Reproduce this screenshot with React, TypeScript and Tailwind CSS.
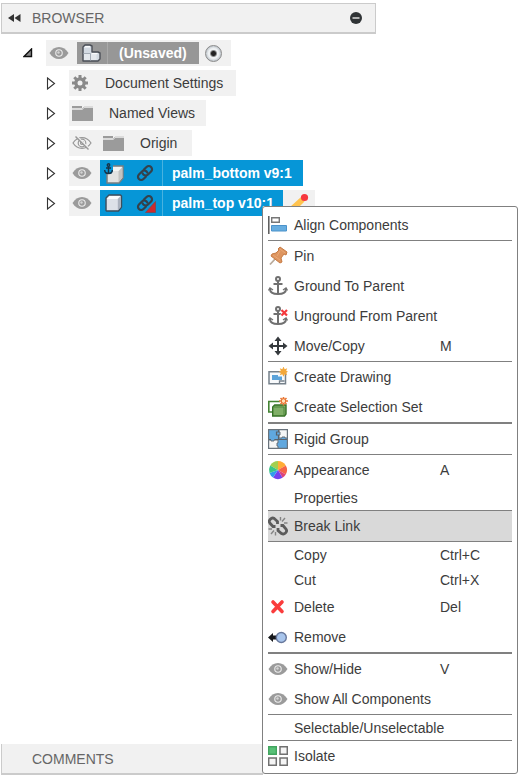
import type { ReactNode } from "react";

function Eye() {
  return (
    <svg width="20" height="14" viewBox="0 0 20 14" aria-hidden="true">
      <path d="M0.500 7C3 3 6 1 10 1s7 2 9.500 6C17 11 14 13 10 13S3 11 0.500 7z" fill="#9b9b9b" />
      <circle cx="10" cy="7" r="3.800" fill="#ececec" />
      <circle cx="10" cy="7" r="2.700" fill="#9b9b9b" />
      <circle cx="9.500" cy="6.500" r="1.200" fill="#d4d4d4" />
    </svg>
  );
}

function EyeOff() {
  return (
    <svg width="20" height="14" viewBox="0 0 20 14" fill="none" stroke="#979797" strokeWidth="1.200" aria-hidden="true">
      <path d="M1 7C3.500 3.200 6.500 1.700 10 1.700S16.500 3.200 19 7c-2.500 3.800-5.500 5.300-9 5.300S3.500 10.800 1 7z" />
      <circle cx="10" cy="7" r="3.800" />
      <circle cx="10" cy="7" r="1.500" />
      <path d="M5 0.500L18 13.500" stroke="#f1f1f1" strokeWidth="1.500" />
      <path d="M3.500 0.500L16.500 13.500" strokeWidth="1.400" />
    </svg>
  );
}

function Folder() {
  return (
    <svg width="21" height="17" viewBox="0 0 21 17" aria-hidden="true">
      <path d="M0 1h10v2H0zM0 5h10l2-2h9v13H0z" fill="#9b9b9b" />
      <path d="M0 4h10l2-2h9" stroke="#c4c4c4" fill="none" />
    </svg>
  );
}

function Gear() {
  return (
    <svg width="16" height="16" viewBox="0 0 16 16" aria-hidden="true">
      <g stroke="#8a8a8a" strokeWidth="3">
        <path d="M8 0v16M0 8h16M2.300 2.300l11.400 11.400M13.700 2.300L2.300 13.700" />
      </g>
      <circle cx="8" cy="8" r="5.800" fill="#8a8a8a" />
      <circle cx="8" cy="8" r="2.500" fill="#f1f1f1" />
    </svg>
  );
}

function Assembly() {
  return (
    <svg width="19" height="18" viewBox="0 0 19 18" strokeLinejoin="round" aria-hidden="true">
      <path d="M1 3l2-2h5l2 1v6h6l2 1v6l-2 2H1z" fill="#d3dae2" stroke="#4b4f57" strokeWidth="1.400" />
      <path d="M2 3.500L3.500 2H8v1.500zM10 9h6l-1.500 1.500H9z" fill="#fbfcfd" />
      <path d="M2 10h6v6H2zM9 11h5.500v5H9z" fill="#e4e8ed" />
      <path d="M1.500 9.500h7V16.500" stroke="#a3abb5" fill="none" />
    </svg>
  );
}

function Cube() {
  return (
    <svg width="20" height="20" viewBox="0 0 20 20" strokeLinejoin="round" aria-hidden="true">
      <path d="M2 5l3-3h11.500l1 1v11l-3 4H2.500L2 17.500z" fill="#c9ced9" stroke="#3c4f5e" strokeWidth="1.400" />
      <path d="M3 6h10.500v11H3z" fill="#dde1e8" />
      <path d="M3 5.500l2.500-2.500H16.500l-3 3H3z" fill="#fafbfc" />
      <path d="M14 6l3-3v11l-3 3z" fill="#abb2be" />
    </svg>
  );
}

function AnchoredCube() {
  return (
    <svg width="21" height="21" viewBox="0 0 21 21" aria-hidden="true">
      <path d="M3 8l4-5h12v12l-4 5H3z" fill="#e3e3e1" stroke="#7b7f80" strokeWidth="1.500" />
      <path d="M14.500 8l4-4v10.500l-4 5z" fill="#c3c3c1" />
      <path d="M4 8l3.500-4H18l-3.500 4z" fill="#f4f4f2" />
      <path d="M0 0h9v8l-2 3H2L0 9z" fill="#0696d7" />
      <g fill="none" stroke="#173247" strokeWidth="1.400">
        <circle cx="4.500" cy="2" r="1.200" />
        <path d="M4.500 3v7M2 5h5M0.700 7c0 2.500 2 3.500 3.800 3.500S8.300 9.500 8.300 7" />
      </g>
    </svg>
  );
}

function LinkIcon({ changed = false }: { changed?: boolean }) {
  return (
    <svg width="20" height="20" viewBox="0 0 20 20" aria-hidden="true">
      <g transform="rotate(-45 9 10)" fill="none" stroke="#34414b" strokeWidth="2.200" strokeLinecap="round">
        <path d="M7 13.200H3.600a3.200 3.200 0 0 1 0-6.400H8a3.200 3.200 0 0 1 2.900 4.600" />
        <path d="M11 6.800h3.400a3.200 3.200 0 0 1 0 6.400H10a3.200 3.200 0 0 1-2.900-4.600" />
      </g>
      {changed && <path d="M9.500 19.500L19.500 8.500v11z" fill="#cf2a2d" stroke="#80454f" strokeWidth="0.800" />}
    </svg>
  );
}

function Pencil() {
  return (
    <svg width="20" height="20" viewBox="0 0 20 20" aria-hidden="true">
      <path d="M0 19l1-5L11.500 4.500l4 4L6 18z" fill="#ffc34e" />
      <path d="M11.500 4.500l2-2 4 4-2 2z" fill="#dbe1e4" />
      <circle cx="15.500" cy="4.500" r="3.600" fill="#f6373d" />
    </svg>
  );
}

function Icon({ children }: { children: ReactNode }) {
  return (
    <svg width="20" height="20" viewBox="0 0 20 20" aria-hidden="true">
      {children}
    </svg>
  );
}

const alignIcon = (
  <Icon>
    <path d="M0.800 1v18" stroke="#595959" strokeWidth="1.500" />
    <path d="M3.700 2.700h7.600v4.600H3.700z" fill="#fff" stroke="#777" strokeWidth="1.400" />
    <path d="M3.500 10.500h15v5.500h-15z" fill="#67ade0" stroke="#4b92ca" />
  </Icon>
);

const pinIcon = (
  <Icon>
    <path d="M8 12L2 18.500" stroke="#b9aa9b" strokeWidth="1.800" />
    <path d="M12 1l7 5-1 3-2-1-3 4 1 4-2 1-9-7 1-2 4-1 3-3-1-1z" fill="#dd9560" stroke="#c77b43" />
    <path d="M12 3l5 4M5 9l7 5M12 5l-3 5" stroke="#eba875" fill="none" />
  </Icon>
);

const anchorShape = (
  <g fill="none" stroke="#707070" strokeWidth="2">
    <circle cx="10" cy="3" r="2" />
    <path d="M10 5v13M5.500 8h9M2 13c0 3 3 5 8 5s8-2 8-5" />
    <path d="M0.500 14.500L2 12l3 2M19.500 14.500L18 12l-3 2" strokeWidth="1.400" />
  </g>
);

const anchorIcon = <Icon>{anchorShape}</Icon>;

const unanchorIcon = (
  <Icon>
    {anchorShape}
    <path d="M13.500 4l5.500 5.500M19 4l-5.500 5.500" stroke="#fff" strokeWidth="3.600" />
    <path d="M13.500 4l5.500 5.500M19 4l-5.500 5.500" stroke="#f5383c" strokeWidth="2.200" />
  </Icon>
);

const moveIcon = (
  <Icon>
    <path d="M10 3v14M3 10h14" stroke="#35393d" strokeWidth="2" />
    <path d="M10 0.500L6.500 5h7zM10 19.500L6.500 15h7zM0.500 10L5 6.500v7zM19.500 10L15 6.500v7z" fill="#35393d" />
  </Icon>
);

const drawingIcon = (
  <Icon>
    <path d="M1 4.800h16.500v12H1z" fill="#f8fafc" stroke="#76818b" strokeWidth="1.500" />
    <path d="M4 8h6v1.500h4V13H4z" fill="#5ba3da" />
    <path d="M11.500 16v-2h5" stroke="#76818b" strokeWidth="1.300" fill="none" />
    <path d="M15.500 -0.500l1.200 2.700 2.500-1-1 2.500 1.800 1-1.800 1 1 2.500-2.500-1-1.200 2.500-1.200-2.500-2.500 1 1-2.500-2-1 2-1-1-2.500 2.500 1z" fill="#f4a83a" />
  </Icon>
);

const selectionIcon = (
  <Icon>
    <path d="M12 4.500H0.800v10.500H4" fill="none" stroke="#448433" strokeWidth="1.600" />
    <path d="M4.700 10l2-2H18v9l-1.500 2H4.700z" fill="#80af67" stroke="#347125" strokeWidth="1.400" />
    <path d="M5.500 10h10.500v8" fill="none" stroke="#4f863e" />
    <path d="M15.500 -0.500v9M11 4h9M12.500 1l6 6M18.500 1l-6 6" stroke="#e97a38" strokeWidth="1.600" />
    <circle cx="15.500" cy="4" r="2.300" fill="#ffe1b9" stroke="#e96924" />
  </Icon>
);

const rigidIcon = (
  <Icon>
    <path d="M0 0h20v20H0z" fill="#60a8df" />
    <path d="M11 0h9v9h-3V8h-3v1h-3V6h1V3h-1z" fill="#f5f6f6" stroke="#66717b" />
    <path d="M0 11h3v1h3v-1h4v3H9v3h1v3H0z" fill="#f5f6f6" stroke="#66717b" />
    <path d="M10.500 0v3h-2v3h2v4M0 10.500h3M6.500 10.500H20" fill="none" stroke="#58616a" strokeWidth="1.200" />
    <path d="M0.600 0.600h18.800v18.800H0.600z" fill="none" stroke="#69737c" strokeWidth="1.200" />
  </Icon>
);

const appearanceIcon = (
  <Icon>
    <path d="M10 10V1a9 9 0 0 0-7.800 4.500z" fill="#a2cf4f" />
    <path d="M10 10l7.800-4.500A9 9 0 0 0 10 1z" fill="#ffad36" />
    <path d="M10 10l7.800 4.500a9 9 0 0 0 0-9z" fill="#f56448" />
    <path d="M10 10l4.500 7.800a9 9 0 0 0 3.300-3.300z" fill="#dc447b" />
    <path d="M10 10l-5 7.500a9 9 0 0 0 9.500.3z" fill="#7541ed" />
    <path d="M10 10l-8.500 3A9 9 0 0 0 5 17.500z" fill="#329cec" />
    <path d="M10 10L2.200 5.500a9 9 0 0 0-.7 7.500z" fill="#39c686" />
  </Icon>
);

const breakIcon = (
  <Icon>
    <g fill="none" stroke="#5c5c5c" strokeWidth="2.800">
      <path d="M7.500 10.500L5 10.500 1.800 7C0 4.500 3.500 0.800 6.300 2.500L9.500 5.500V8" />
      <path d="M10 12v2.500l3.500 3c3 1.800 6.300-2 4.500-4.500L15 9.500h-2.500" />
    </g>
    <path d="M12.500 1v3.500M17 2l-3 3.500M19.500 7H16M0.500 13H4M3 18l3-3.500M7.500 19.500V16" stroke="#858585" strokeWidth="1.400" />
  </Icon>
);

const deleteIcon = (
  <Icon>
    <path d="M5 5l9 9.500M14 5L5 14.500" stroke="#fa3c3c" strokeWidth="3.600" strokeLinecap="round" />
  </Icon>
);

const removeIcon = (
  <Icon>
    <path d="M0 10.500L5 6v2.500h4v4H5V15z" fill="#17191c" />
    <circle cx="13.300" cy="10.500" r="5" fill="#a8c5ec" stroke="#68789c" strokeWidth="1.400" />
  </Icon>
);

const isolateIcon = (
  <Icon>
    <path d="M0.700 0.700h7.600v7.600H0.700z" fill="#59c178" stroke="#42a55f" strokeWidth="1.400" />
    <path d="M12 0.700h7.300v7.600H12zM0.700 12h7.600v7.300H0.700zM12 12h7.300v7.300H12z" fill="#f5f5f5" stroke="#717171" strokeWidth="1.500" />
  </Icon>
);

function Expander({ label, open = false }: { label: string; open?: boolean }) {
  return (
    <button type="button" aria-label={label} aria-expanded={open} className="flex h-6 w-3 shrink-0 items-center justify-center">
      {open ? (
        <svg width="10" height="10" viewBox="0 0 10 10">
          <path d="M1 8.500L8.500 1v7.500z" fill="#888" stroke="#111" strokeWidth="1.400" />
        </svg>
      ) : (
        <svg width="10" height="13" viewBox="0 0 10 13">
          <path d="M1.500 1L8.500 6.500 1.500 12z" fill="#fff" stroke="#333" strokeWidth="1.100" />
        </svg>
      )}
    </button>
  );
}

function TreeRow({ label, children }: { label: string; children: ReactNode }) {
  return (
    <li className="flex h-[26px] items-center gap-3 pl-11">
      <Expander label={`Expand ${label}`} />
      <div className="flex h-full items-center bg-[#f1f1f1]">{children}</div>
    </li>
  );
}

function EyeButton({ label, off = false }: { label: string; off?: boolean }) {
  return (
    <button type="button" aria-label={label} className="flex h-full w-[31px] items-center pl-[3px]">
      {off ? <EyeOff /> : <Eye />}
    </button>
  );
}

function MenuItem({
  icon,
  label,
  shortcut,
  small = false,
  active = false,
}: {
  icon?: ReactNode;
  label: string;
  shortcut?: string;
  small?: boolean;
  active?: boolean;
}) {
  return (
    <button
      type="button"
      role="menuitem"
      className={`flex w-full items-center gap-1.5 text-left ${small ? "h-[25px]" : "h-[30px]"} ${active ? "bg-[#d9d9d9]" : "hover:bg-[#d9d9d9]"}`}
    >
      <span className="flex w-5 shrink-0 justify-center">{icon}</span>
      <span className="flex-1 whitespace-nowrap">{label}</span>
      {shortcut && <span className="w-[72px]">{shortcut}</span>}
    </button>
  );
}

function Divider({ thick = false }: { thick?: boolean }) {
  return <hr className={`border-[#808080] ${thick ? "border-t-2" : "border-t"}`} />;
}

export default function App() {
  return (
    <div className="relative flex min-h-screen flex-col bg-white px-px pt-[3px] pb-[3px] font-['Liberation_Sans',Arial,sans-serif] text-sm leading-5 text-[#3c3c3c]">
      <header className="flex h-[31px] w-full max-w-[375px] items-center border border-b-2 border-[#cbcbcb] bg-[#f1f1f1] pr-3">
        <button type="button" aria-label="Collapse browser" className="flex w-[30px] items-center pl-1.5">
          <svg width="13" height="8" viewBox="0 0 13 8" fill="#333">
            <path d="M0 4l6-4v8zM6.500 4l6-4v8z" />
          </svg>
        </button>
        <h1 className="flex-1 text-[#666]">BROWSER</h1>
        <button type="button" aria-label="Minimize browser">
          <svg width="14" height="14" viewBox="0 0 14 14">
            <circle cx="7" cy="7" r="6" fill="#303436" />
            <path d="M3.500 7h7" stroke="#dedede" strokeWidth="1.500" />
          </svg>
        </button>
      </header>

      <ul className="flex flex-1 flex-col gap-1 pt-1.5">
        <li className="flex h-[26px] items-center gap-3 pl-[21px]">
          <Expander label="Collapse document" open />
          <div className="flex h-full items-center bg-[#f1f1f1]">
            <EyeButton label="Show document" />
            <div className="flex h-[22px] items-center bg-[#979797] font-bold text-white">
              <span className="flex h-full w-[31px] items-center border-r border-[#a9a9a9] pl-[5px]">
                <Assembly />
              </span>
              <span className="pr-3 pl-[11px]">(Unsaved)</span>
            </div>
            <div className="flex h-full w-8 items-center pl-1.5">
              <input
                type="radio"
                name="active-document"
                aria-label="Activate document"
                defaultChecked
                className="size-[17px] appearance-none rounded-full border border-[#8a8a8a] bg-[radial-gradient(circle,#222_0_2px,#eef1f3_4px_5px,#b9c0c7_8px)]"
              />
            </div>
          </div>
        </li>
        <TreeRow label="Document Settings">
          <span className="w-9 pl-[3px]"><Gear /></span>
          <span className="pr-[13px]">Document Settings</span>
        </TreeRow>
        <TreeRow label="Named Views">
          <span className="w-10 pl-[3px]"><Folder /></span>
          <span className="pr-[11px]">Named Views</span>
        </TreeRow>
        <TreeRow label="Origin">
          <EyeButton label="Show Origin" off />
          <span className="w-10 pl-[3px]"><Folder /></span>
          <span className="pr-[15px]">Origin</span>
        </TreeRow>
        <TreeRow label="palm_bottom">
          <EyeButton label="Hide palm_bottom" />
          <div className="flex h-full items-center bg-[#0696d7] font-bold text-white">
            <span className="w-9 pl-1"><AnchoredCube /></span>
            <span className="flex h-full w-[27px] items-center border-r border-[#48b2df]"><LinkIcon /></span>
            <span className="pr-[11px] pl-[9px]">palm_bottom v9:1</span>
          </div>
        </TreeRow>
        <TreeRow label="palm_top">
          <EyeButton label="Hide palm_top" />
          <div className="flex h-full items-center bg-[#0696d7] font-bold text-white">
            <span className="w-9 pl-1"><Cube /></span>
            <span className="flex h-full w-[27px] items-center border-r border-[#48b2df]"><LinkIcon changed /></span>
            <span className="pr-[9px] pl-[9px]">palm_top v10:1</span>
          </div>
          <button type="button" aria-label="Edit palm_top" className="flex h-full w-8 items-center pl-1.5">
            <Pencil />
          </button>
        </TreeRow>
      </ul>

      <footer className="flex h-[31px] w-full max-w-[262px] items-center border-b-2 border-l border-[#cbcbcb] bg-[#f1f1f1] pl-[30px] text-[#666]">
        <h2>COMMENTS</h2>
      </footer>

      <div
        role="menu"
        aria-label="Component actions"
        className="absolute top-[206px] left-[262px] w-64 rounded-[3px] border border-[#808080] bg-white px-[5px] pt-[3px] pb-[2px]"
      >
        <MenuItem icon={alignIcon} label="Align Components" />
        <Divider />
        <MenuItem icon={pinIcon} label="Pin" />
        <MenuItem icon={anchorIcon} label="Ground To Parent" />
        <MenuItem icon={unanchorIcon} label="Unground From Parent" />
        <MenuItem icon={moveIcon} label="Move/Copy" shortcut="M" />
        <Divider />
        <MenuItem icon={drawingIcon} label="Create Drawing" />
        <MenuItem icon={selectionIcon} label="Create Selection Set" />
        <Divider thick />
        <MenuItem icon={rigidIcon} label="Rigid Group" />
        <Divider />
        <MenuItem icon={appearanceIcon} label="Appearance" shortcut="A" />
        <MenuItem label="Properties" small />
        <Divider />
        <MenuItem icon={breakIcon} label="Break Link" active />
        <Divider />
        <MenuItem label="Copy" shortcut="Ctrl+C" small />
        <MenuItem label="Cut" shortcut="Ctrl+X" small />
        <MenuItem icon={deleteIcon} label="Delete" shortcut="Del" />
        <MenuItem icon={removeIcon} label="Remove" />
        <Divider thick />
        <MenuItem icon={<Eye />} label="Show/Hide" shortcut="V" />
        <MenuItem icon={<Eye />} label="Show All Components" />
        <Divider />
        <MenuItem label="Selectable/Unselectable" small />
        <Divider />
        <MenuItem icon={isolateIcon} label="Isolate" />
      </div>
    </div>
  );
}
